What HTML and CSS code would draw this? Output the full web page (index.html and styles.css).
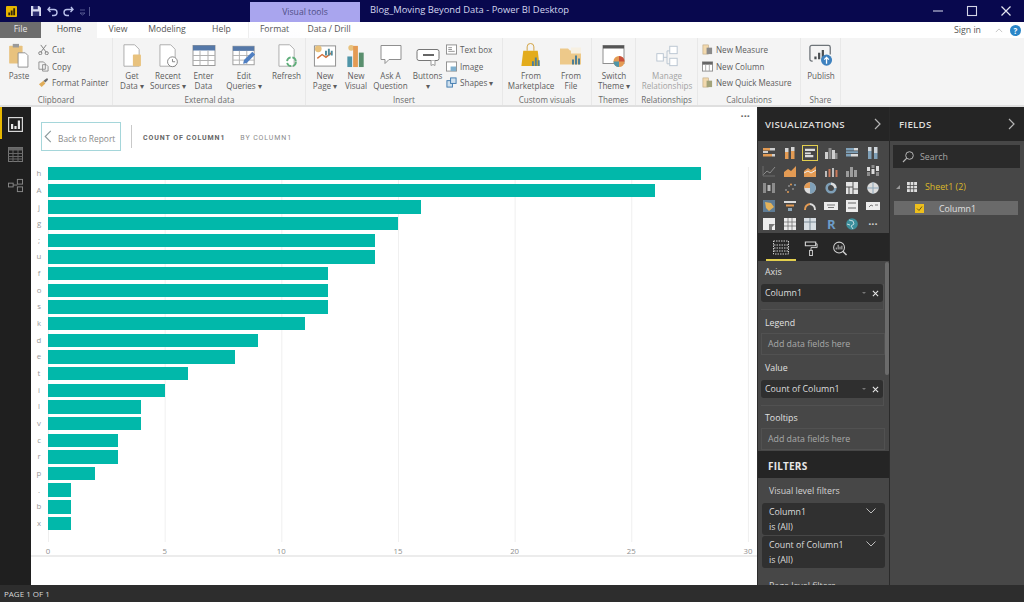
FILE: index.html
```html
<!DOCTYPE html>
<html lang="en">
<head>
<meta charset="utf-8">
<title>Blog_Moving Beyond Data - Power BI Desktop</title>
<link rel="stylesheet" href="styles.css">
</head>
<body>
<div class="app">
  <header class="titlebar">
    <div class="quick">
      <svg class="q-logo" viewBox="0 0 12 12"><rect width="12" height="12" rx="1" fill="#e6b400"/><path d="M2.5 10V7h2v3zM5.2 10V5h2v5zM7.9 10V2.5h2V10z" fill="#33280a"/></svg>
      <svg class="q-save" viewBox="0 0 11 11"><path d="M0 0h9l2 2v9H0z" fill="#d7d9ee"/><path d="M2.5 0h5v3.5h-5zM2 6h7v5H2z" fill="#2b2c70"/></svg>
      <svg class="q-undo" viewBox="0 0 11 11"><path d="M3 1 1 3.5 3.5 6M1.5 3.5H7a3 3 0 0 1 0 6H5" fill="none" stroke="#b9c0ea" stroke-width="1.4"/></svg>
      <svg class="q-redo" viewBox="0 0 11 11"><path d="M8 1l2 2.5L7.500 6M9.500 3.500H4a3 3 0 0 0 0 6h2" fill="none" stroke="#b9c0ea" stroke-width="1.400"/></svg>
      <svg class="q-more" viewBox="0 0 12 11"><path d="M1 4h5M1 7h5l-2.500 2zM10.500 1v9" fill="none" stroke="#53578f" stroke-width="1"/></svg>
    </div>
    <div class="tooltab">Visual tools</div>
    <div class="doc-title">Blog_Moving Beyond Data - Power BI Desktop</div>
    <div class="winctl">
      <svg viewBox="0 0 12 12"><path d="M1 6h10" stroke="#b9bbd6" stroke-width="1.200"/></svg>
      <svg viewBox="0 0 12 12"><rect x="1.500" y="1.500" width="9" height="9" fill="none" stroke="#d4d5e6" stroke-width="1.100"/></svg>
      <svg viewBox="0 0 12 12"><path d="M1.500 1.500l9 9M10.500 1.500l-9 9" stroke="#e4e5f0" stroke-width="1.200"/></svg>
    </div>
  </header>

  <nav class="tabs">
    <div class="tab file">File</div>
    <div class="tab home">Home</div>
    <div class="tab view">View</div>
    <div class="tab modeling">Modeling</div>
    <div class="tab help">Help</div>
    <div class="tab format">Format</div>
    <div class="tab drill">Data / Drill</div>
    <div class="signin">Sign in</div>
    <svg class="collapse" viewBox="0 0 10 6"><path d="M1 5l4-4 4 4" fill="none" stroke="#c4c4c4" stroke-width="1.200"/></svg>
    <div class="helpdot">?</div>
  </nav>

  <section class="ribbon">
    <div class="group g-clip">
      <div class="gbody">
        <div class="big w38">
          <svg viewBox="0 0 24 28"><rect x="1" y="3" width="15" height="20" rx="1" fill="#e8c27e"/><rect x="5" y="1" width="7" height="4" fill="#9a9a9a"/><path d="M11 11h8l3 3v13H11z" fill="#fff" stroke="#8a8a8a"/></svg>
          <span>Paste</span>
        </div>
        <div class="stack">
          <div class="small"><svg viewBox="0 0 12 12"><path d="M3 1l6 8M9 1L3 9" stroke="#7b7b7b" fill="none"/><circle cx="2.500" cy="10" r="1.700" fill="none" stroke="#7b7b7b"/><circle cx="9.500" cy="10" r="1.700" fill="none" stroke="#7b7b7b"/></svg>Cut</div>
          <div class="small"><svg viewBox="0 0 12 12"><path d="M1 1h5l2 2v6H1zM5 4h4l2 2v5H5z" fill="#f4f4f4" stroke="#8c8c8c"/></svg>Copy</div>
          <div class="small"><svg viewBox="0 0 12 12"><path d="M1 8l5-4 2 3-4 4z" fill="#e0ad5a"/><path d="M6 4l4-3 1 2-3 3z" fill="#6b6b6b"/></svg>Format Painter</div>
        </div>
      </div>
      <div class="glabel">Clipboard</div>
    </div>

    <div class="group g-ext">
      <div class="gbody">
        <div class="big w36"><svg viewBox="0 0 24 28"><path d="M3 2h12l5 5v19H3z" fill="#fff" stroke="#a6a6a6"/><rect x="13" y="13" width="9" height="13" rx="1" fill="#e8c27e"/></svg><span>Get<br>Data ▾</span></div>
        <div class="big w36"><svg viewBox="0 0 24 28"><path d="M3 2h12l5 5v19H3z" fill="#fff" stroke="#a6a6a6"/><circle cx="17" cy="21" r="5.500" fill="#fff" stroke="#7c7c7c"/><path d="M17 18v3h3" fill="none" stroke="#7c7c7c"/></svg><span>Recent<br>Sources ▾</span></div>
        <div class="big w35"><svg viewBox="0 0 24 24"><rect x="1" y="2" width="22" height="20" fill="#fff" stroke="#9a9a9a"/><rect x="1" y="2" width="22" height="5" fill="#5578a8"/><path d="M1 12h22M1 17h22M8 7v15M16 7v15" stroke="#b0b0b0"/></svg><span>Enter<br>Data</span></div>
        <div class="big w46"><svg viewBox="0 0 26 24"><rect x="1" y="2" width="23" height="20" fill="#fff" stroke="#9a9a9a"/><rect x="1" y="2" width="23" height="5" fill="#5578a8"/><path d="M1 12h23M1 17h23M8 7v15M16 7v15" stroke="#b0b0b0"/><path d="M12 21l1-4 9-9 3 3-9 9z" fill="#4f7fc2"/></svg><span>Edit<br>Queries ▾</span></div>
        <div class="big w39"><svg viewBox="0 0 24 28"><path d="M3 2h12l5 5v19H3z" fill="#fff" stroke="#a6a6a6"/><circle cx="17" cy="21" r="5" fill="none" stroke="#5fae7a" stroke-width="2" stroke-dasharray="6 2"/></svg><span>Refresh</span></div>
      </div>
      <div class="glabel">External data</div>
    </div>

    <div class="group g-ins">
      <div class="gbody">
        <div class="big w38"><svg viewBox="0 0 24 26"><rect x="1" y="3" width="22" height="21" fill="#fff" stroke="#8f8f8f"/><path d="M4 16l5-4 4 3 6-5" fill="none" stroke="#d2703a" stroke-width="1.500"/><path d="M13 13v-5M16 13V6M19 13V8" stroke="#4f8b9c" stroke-width="2"/><circle cx="5" cy="6" r="3.500" fill="#e8c27e"/></svg><span>New<br>Page ▾</span></div>
        <div class="big w24"><svg viewBox="0 0 22 26"><circle cx="6" cy="5" r="3" fill="#e8c27e"/><rect x="2" y="14" width="5" height="11" fill="#4f95a8"/><rect x="8" y="3" width="5" height="22" fill="#e39b54"/><rect x="14" y="10" width="5" height="15" fill="#5a8f6e"/></svg><span>New<br>Visual</span></div>
        <div class="big w45"><svg viewBox="0 0 24 24"><path d="M2 2h20v14H10l-4 4v-4H2z" fill="#fff" stroke="#8f8f8f"/></svg><span>Ask A<br>Question</span></div>
        <div class="big w29"><svg viewBox="0 0 24 24"><rect x="1" y="6" width="22" height="11" rx="2" fill="#fff" stroke="#777"/><path d="M7 11.500h11" stroke="#666" stroke-width="2"/><path d="M15 17v5l2-1 2 1v-5" fill="#fff" stroke="#999"/></svg><span>Buttons<br>▾</span></div>
        <div class="stack s-ins">
          <div class="small"><svg viewBox="0 0 12 12"><rect x=".5" y="1" width="11" height="10" fill="#fff" stroke="#8c8c8c"/><path d="M2.500 4h4M2.500 6h4M2.500 8h7" stroke="#8c8c8c"/></svg>Text box</div>
          <div class="small"><svg viewBox="0 0 12 12"><rect x=".5" y="1" width="11" height="10" fill="#fff" stroke="#8c8c8c"/><rect x="5" y="6" width="6" height="5" fill="#7fb0cf"/></svg>Image</div>
          <div class="small"><svg viewBox="0 0 12 12"><rect x="1" y="4" width="6" height="7" fill="#cfe0ee" stroke="#3d78ad"/><rect x="5" y="1" width="6" height="6" fill="#cfe0ee" stroke="#3d78ad"/></svg>Shapes ▾</div>
        </div>
      </div>
      <div class="glabel">Insert</div>
    </div>

    <div class="group g-cus">
      <div class="gbody">
        <div class="big w56"><svg viewBox="0 0 24 26"><path d="M4 8h15l2 16H2z" fill="#e3ac1c"/><path d="M8 8V4a3 3 0 0 1 7 0v4" fill="none" stroke="#d0a040"/><path d="M14 24v-5M17 24v-9M20 24v-6" stroke="#4f7f96" stroke-width="2"/></svg><span>From<br>Marketplace</span></div>
        <div class="big w24"><svg viewBox="0 0 24 24"><path d="M1 5h8l2 2h11v14H1z" fill="#edc98a"/><path d="M12 4h10v6H12z" fill="#f7f0e2"/><path d="M14 21v-5M17 21v-9M20 21v-6" stroke="#4f7f96" stroke-width="2"/></svg><span>From<br>File</span></div>
      </div>
      <div class="glabel">Custom visuals</div>
    </div>

    <div class="group g-the">
      <div class="gbody">
        <div class="big w44"><svg viewBox="0 0 24 24"><rect x="1" y="2" width="21" height="18" fill="#fff" stroke="#8f8f8f"/><rect x="1" y="2" width="21" height="3" fill="#555"/><circle cx="17" cy="18" r="5.500" fill="#e39b54"/><path d="M17 18v-5.500a5.500 5.500 0 0 1 5.500 5.500z" fill="#c9503c"/><path d="M17 18h-5.500a5.500 5.500 0 0 0 5.500 5.500z" fill="#4f95a8"/></svg><span>Switch<br>Theme ▾</span></div>
      </div>
      <div class="glabel">Themes</div>
    </div>

    <div class="group g-rel">
      <div class="gbody">
        <div class="big w62 dim"><svg viewBox="0 0 26 24"><path d="M8 14h5M13 7v14M13 7h4M13 21h4" stroke="#b8c4d0" fill="none"/><rect x="2" y="10" width="7" height="8" fill="#fff" stroke="#b8c4d0"/><rect x="16" y="2" width="8" height="8" fill="#fff" stroke="#b8c4d0"/><rect x="16" y="15" width="8" height="8" fill="#fff" stroke="#b8c4d0"/></svg><span>Manage<br>Relationships</span></div>
      </div>
      <div class="glabel">Relationships</div>
    </div>

    <div class="group g-calc">
      <div class="gbody">
        <div class="stack s-calc">
          <div class="small"><svg viewBox="0 0 12 12"><rect x="1" y="1" width="6" height="10" fill="#f2d9ae" stroke="#b9a27a" stroke-width=".6"/><rect x="5" y="4" width="6" height="7" fill="#8a8a8a"/></svg>New Measure</div>
          <div class="small"><svg viewBox="0 0 12 12"><rect x=".5" y="1" width="11" height="10" fill="#fff" stroke="#8c8c8c"/><rect x=".5" y="1" width="11" height="3" fill="#666"/><path d="M4 4v7M8 4v7" stroke="#aaa"/></svg>New Column</div>
          <div class="small"><svg viewBox="0 0 12 12"><rect x="1" y="1" width="6" height="10" fill="#f2d9ae" stroke="#b9a27a" stroke-width=".6"/><rect x="5" y="4" width="6" height="7" fill="#a3a37a"/></svg>New Quick Measure</div>
        </div>
      </div>
      <div class="glabel">Calculations</div>
    </div>

    <div class="group g-share">
      <div class="gbody">
        <div class="big w40"><svg viewBox="0 0 26 24"><path d="M4 18H3a2 2 0 0 1-2-2V3a2 2 0 0 1 2-2h18a2 2 0 0 1 2 2v8" fill="none" stroke="#6e7479" stroke-width="1.400"/><path d="M7 16v-3M11 16V9M15 16V6" stroke="#4a4f52" stroke-width="2.400"/><circle cx="19" cy="17" r="6" fill="#3f82bf"/><path d="M19 21v-7M16.500 16.500L19 14l2.500 2.500" fill="none" stroke="#fff" stroke-width="1.400"/></svg><span>Publish</span></div>
      </div>
      <div class="glabel">Share</div>
    </div>
  </section>

  <main class="workspace">
    <aside class="sidenav">
      <div class="nav-item active"><svg viewBox="0 0 15 15"><rect x=".6" y=".6" width="13.800" height="13.800" fill="none" stroke="#d8d8d8" stroke-width="1.200"/><path d="M3 12V7h2.200v5zM6.400 12V9h2.200v3zM9.800 12V3.500H12V12z" fill="#e8e8e8"/></svg></div>
      <div class="nav-item"><svg viewBox="0 0 15 15"><rect x=".5" y=".5" width="14" height="14" fill="none" stroke="#777"/><rect x=".5" y=".5" width="14" height="3" fill="#666"/><path d="M.5 6.500h14M.5 9.500h14M.5 12h14M5 3v12M10 3v12" stroke="#666"/></svg></div>
      <div class="nav-item"><svg viewBox="0 0 16 14"><g fill="none" stroke="#8a8a8a"><rect x=".5" y="4.500" width="5" height="4"/><rect x="10" y=".5" width="5.500" height="5"/><rect x="10" y="8.500" width="5.500" height="5"/><path d="M5.500 6.500h4.500"/></g></svg></div>
    </aside>

    <section class="canvas">
      <div class="focus">
        <div class="more">···</div>
        <div class="focus-head">
          <div class="back"><svg viewBox="0 0 8 14"><path d="M7 1 1 7l6 6" fill="none" stroke="#8a9a9c" stroke-width="1.200"/></svg><span>Back to Report</span></div>
          <div class="vdiv"></div>
          <div class="vt-main">COUNT OF COLUMN1</div>
          <div class="vt-sub">BY COLUMN1</div>
        </div>
        <div class="plot">
          <div class="row"><span class="cat">h</span><div class="track"><div class="bar" style="width:93.33%"></div></div></div>
          <div class="row"><span class="cat">A</span><div class="track"><div class="bar" style="width:86.67%"></div></div></div>
          <div class="row"><span class="cat">j</span><div class="track"><div class="bar" style="width:53.33%"></div></div></div>
          <div class="row"><span class="cat">g</span><div class="track"><div class="bar" style="width:50%"></div></div></div>
          <div class="row"><span class="cat">;</span><div class="track"><div class="bar" style="width:46.67%"></div></div></div>
          <div class="row"><span class="cat">u</span><div class="track"><div class="bar" style="width:46.67%"></div></div></div>
          <div class="row"><span class="cat">f</span><div class="track"><div class="bar" style="width:40%"></div></div></div>
          <div class="row"><span class="cat">o</span><div class="track"><div class="bar" style="width:40%"></div></div></div>
          <div class="row"><span class="cat">s</span><div class="track"><div class="bar" style="width:40%"></div></div></div>
          <div class="row"><span class="cat">k</span><div class="track"><div class="bar" style="width:36.67%"></div></div></div>
          <div class="row"><span class="cat">d</span><div class="track"><div class="bar" style="width:30%"></div></div></div>
          <div class="row"><span class="cat">e</span><div class="track"><div class="bar" style="width:26.67%"></div></div></div>
          <div class="row"><span class="cat">t</span><div class="track"><div class="bar" style="width:20%"></div></div></div>
          <div class="row"><span class="cat">i</span><div class="track"><div class="bar" style="width:16.67%"></div></div></div>
          <div class="row"><span class="cat">l</span><div class="track"><div class="bar" style="width:13.33%"></div></div></div>
          <div class="row"><span class="cat">v</span><div class="track"><div class="bar" style="width:13.33%"></div></div></div>
          <div class="row"><span class="cat">c</span><div class="track"><div class="bar" style="width:10%"></div></div></div>
          <div class="row"><span class="cat">r</span><div class="track"><div class="bar" style="width:10%"></div></div></div>
          <div class="row"><span class="cat">p</span><div class="track"><div class="bar" style="width:6.67%"></div></div></div>
          <div class="row"><span class="cat">.</span><div class="track"><div class="bar" style="width:3.33%"></div></div></div>
          <div class="row"><span class="cat">b</span><div class="track"><div class="bar" style="width:3.33%"></div></div></div>
          <div class="row"><span class="cat">x</span><div class="track"><div class="bar" style="width:3.33%"></div></div></div>
        </div>
        <div class="axis"><span>0</span><span>5</span><span>10</span><span>15</span><span>20</span><span>25</span><span>30</span></div>
      </div>
    </section>

    <aside class="viz">
      <div class="phead"><span>VISUALIZATIONS</span><svg viewBox="0 0 7 12"><path d="M1 1l5 5-5 5" fill="none" stroke="#b5b5b5" stroke-width="1.200"/></svg></div>
      <div class="vgrid">
        <svg viewBox="0 0 14 12"><path d="M1 1h7v2.500H1zM1 7h9v2.500H1z" fill="#e39b54"/><path d="M8 1h5v2.500H8zM10 7h3v2.500h-3zM1 4h5v2H1z" fill="#cfcfcf"/></svg>
        <svg viewBox="0 0 14 12"><path d="M2 5h3.500v7H2zM8 4h3.500v8H8z" fill="#e39b54"/><path d="M2 1h3.500v4H2zM8 0h3.500v4H8z" fill="#d5d5d5"/></svg>
        <div class="vsel"><svg viewBox="0 0 14 12"><path d="M1 1h12v3H1zM1 5h7v2.500H1zM1 8.500h10V11H1z" fill="#dcdcdc"/><path d="M1 4.500h12" stroke="#333"/></svg></div>
        <svg viewBox="0 0 14 12"><path d="M1 5h3v7H1zM8 3h3v9H8z" fill="#cfcfcf"/><path d="M4.500 1h3v11h-3zM11 6h2.500v6H11z" fill="#8c8c8c"/></svg>
        <svg viewBox="0 0 14 12"><path d="M1 1h8v2.500H1zM1 7h5v2.500H1z" fill="#7fa0b8"/><path d="M9 1h4v2.500H9zM6 7h7v2.500H6z" fill="#dcdcdc"/><path d="M1 4.200h12v2H1z" fill="#7fa0b8"/></svg>
        <svg viewBox="0 0 14 12"><path d="M2 4h3.500v8H2zM8 6h3.500v6H8z" fill="#7fa0b8"/><path d="M2 0h3.500v4H2zM8 0h3.500v6H8z" fill="#cfd6dc"/></svg>

        <svg viewBox="0 0 14 12"><path d="M1 10l4-4 3 2 5-6" fill="none" stroke="#8c8c8c"/><path d="M1 1v10h12" fill="none" stroke="#6d6d6d"/></svg>
        <svg viewBox="0 0 14 12"><path d="M1 12V7l4-3 3 2 5-5v11z" fill="#e39b54"/></svg>
        <svg viewBox="0 0 14 12"><path d="M1 12V6l4-3 3 2 5-4v11z" fill="#e39b54"/><path d="M1 8l4-2 3 2 5-3" fill="none" stroke="#eee"/></svg>
        <svg viewBox="0 0 14 12"><path d="M1 6h2v6H1zM8 3h2v9H8z" fill="#bdbdbd"/><path d="M4.500 4h2v8h-2zM11.500 5h2v7h-2z" fill="#c9795a"/></svg>
        <svg viewBox="0 0 14 12"><path d="M1 6h3v6H1zM5 2h3v10H5zM9 5h3v7H9z" fill="#9c9c9c"/></svg>
        <svg viewBox="0 0 14 12"><path d="M1 2h3v4H1zM5.500 4h3v5h-3zM10 1h3v5h-3z" fill="#dcdcdc"/><path d="M1 7h3v4H1zM5.500 0h3v3h-3zM10 7h3v4h-3z" fill="#8c8c8c"/></svg>

        <svg viewBox="0 0 14 12"><path d="M1 1h3v10H1zM10 1h3v10h-3z" fill="#8c8c8c"/><path d="M5.500 3h3v6h-3z" fill="#b8b8b8"/></svg>
        <svg viewBox="0 0 14 12"><g fill="#8d8d8d"><circle cx="3" cy="8" r="1"/><circle cx="6" cy="4" r="1"/><circle cx="10" cy="7" r="1"/></g><circle cx="8" cy="2.500" r="1" fill="#e39b54"/><circle cx="5" cy="10" r="1" fill="#e39b54"/><circle cx="12" cy="3" r="1" fill="#7fa0b8"/></svg>
        <svg viewBox="0 0 14 12"><circle cx="7" cy="6" r="5.800" fill="#dcdcdc"/><path d="M7 6V.2a5.800 5.800 0 0 1 0 11.600z" fill="#7fa0b8"/><path d="M7 6H1.200A5.800 5.800 0 0 1 7 .2z" fill="#e39b54"/></svg>
        <svg viewBox="0 0 14 12"><circle cx="7" cy="6" r="4.300" fill="none" stroke="#7fa0b8" stroke-width="2.600"/><path d="M7 1.700A4.300 4.300 0 0 1 11.300 6" fill="none" stroke="#dcdcdc" stroke-width="2.600"/></svg>
        <svg viewBox="0 0 14 12"><rect x="1" width="12" height="12" fill="#e4e4e4"/><path d="M1 5h7M8 0v12M8 7h5M4 5v7" stroke="#555"/></svg>
        <svg viewBox="0 0 14 12"><circle cx="7" cy="6" r="5.800" fill="#dcdcdc"/><path d="M1 6h12M7 0v12" stroke="#8da6b8"/></svg>

        <svg viewBox="0 0 14 12"><rect x="1" width="12" height="12" fill="#5f7c95"/><path d="M3 2l6 1 3 4-5 4-3-3z" fill="#e3b25a"/></svg>
        <svg viewBox="0 0 14 12"><path d="M1 1h12v2H1z" fill="#dcdcdc"/><path d="M3 4.500h8v2H3z" fill="#e39b54"/><path d="M5 8h4v3H5z" fill="#8da6b8"/></svg>
        <svg viewBox="0 0 14 12"><path d="M2 10A5.500 5.500 0 0 1 7 4" fill="none" stroke="#e39b54" stroke-width="2"/><path d="M7 4a5.500 5.500 0 0 1 5 6" fill="none" stroke="#dcdcdc" stroke-width="2"/></svg>
        <svg viewBox="0 0 14 12"><rect y="2" width="14" height="8" fill="#ececec"/><path d="M3 5h8M4 7.500h6" stroke="#777"/></svg>
        <svg viewBox="0 0 14 12"><rect x="1" width="12" height="12" fill="#ececec"/><path d="M3 3h8M3 8h8" stroke="#666" stroke-width="1.200"/></svg>
        <svg viewBox="0 0 14 12"><rect y="2" width="14" height="8" fill="#ececec"/><path d="M3 7l2-2 2 1M9 5h3" stroke="#777" fill="none"/></svg>

        <svg viewBox="0 0 14 12"><rect x="1" width="12" height="12" fill="#ececec"/><path d="M7 6h6l-3 3v3H7z" fill="#777"/></svg>
        <svg viewBox="0 0 14 12"><rect x="1" width="12" height="12" fill="#ececec"/><path d="M1 4h12M1 8h12M5 0v12M9 0v12" stroke="#666" stroke-width=".7"/></svg>
        <svg viewBox="0 0 14 12"><rect x="1" width="12" height="12" fill="#d8dee3"/><path d="M1 4h12M7 0v12" stroke="#7a8a96"/></svg>
        <div class="vr">R</div>
        <svg viewBox="0 0 14 12"><circle cx="7" cy="6" r="5.800" fill="#3c8f9c"/><path d="M4 2l4 1 1 3-3 2 2 3M2 6l3 1" fill="none" stroke="#cfe3e6" stroke-width=".9"/></svg>
        <div class="vdots">···</div>
      </div>
      <div class="vtabs">
        <div class="vtab on"><svg viewBox="0 0 16 14"><rect x=".5" y=".5" width="15" height="13" fill="none" stroke="#cfcfcf" stroke-dasharray="1.500 1"/><path d="M1 4.500h14M1 7.500h14M1 10.500h14" stroke="#cfcfcf" stroke-dasharray="1.500 1"/></svg></div>
        <div class="vtab"><svg viewBox="0 0 14 16"><path d="M1 1h11v4H1z" fill="none" stroke="#d5d5d5" stroke-width="1.200"/><path d="M12 3h1.500v4H7v3" fill="none" stroke="#d5d5d5"/><rect x="5.500" y="10" width="3" height="5.500" fill="none" stroke="#d5d5d5"/></svg></div>
        <div class="vtab"><svg viewBox="0 0 16 16"><circle cx="7" cy="7" r="5.800" fill="none" stroke="#cfcfcf" stroke-width="1.100"/><path d="M4 9V7M6 9V4M8 9V6M10 9V5" stroke="#cfcfcf"/><path d="M11 11l4 4" stroke="#cfcfcf" stroke-width="1.600"/></svg></div>
      </div>
      <div class="wells">
        <div class="wlabel">Axis</div>
        <div class="wbox filled"><div class="field"><span>Column1</span><i class="dd"></i><svg class="x" viewBox="0 0 8 8"><path d="M1 1l6 6M7 1 1 7" stroke="#e8e8e8" stroke-width="1.200"/></svg></div></div>
        <div class="wlabel">Legend</div>
        <div class="wbox empty">Add data fields here</div>
        <div class="wlabel l-val">Value</div>
        <div class="wbox filled"><div class="field"><span>Count of Column1</span><i class="dd"></i><svg class="x" viewBox="0 0 8 8"><path d="M1 1l6 6M7 1 1 7" stroke="#e8e8e8" stroke-width="1.200"/></svg></div></div>
        <div class="wlabel l-tip">Tooltips</div>
        <div class="wbox empty">Add data fields here</div>
        <div class="scroll"></div>
      </div>
      <div class="fhead">FILTERS</div>
      <div class="filters">
        <div class="flabel">Visual level filters</div>
        <div class="fcard"><div>Column1<br>is (All)</div><svg viewBox="0 0 10 6"><path d="M.5.5 5 5 9.500.5" fill="none" stroke="#bdbdbd"/></svg></div>
        <div class="fcard"><div>Count of Column1<br>is (All)</div><svg viewBox="0 0 10 6"><path d="M.5.5 5 5 9.500.5" fill="none" stroke="#bdbdbd"/></svg></div>
        <div class="flabel f2">Page level filters</div>
      </div>
    </aside>

    <aside class="fields">
      <div class="phead"><span>FIELDS</span><svg viewBox="0 0 7 12"><path d="M1 1l5 5-5 5" fill="none" stroke="#b5b5b5" stroke-width="1.200"/></svg></div>
      <div class="fbody">
        <div class="search"><svg viewBox="0 0 12 12"><circle cx="7.500" cy="4.500" r="3.800" fill="none" stroke="#b5b5b5"/><path d="M4.800 7.200 1 11" stroke="#b5b5b5" stroke-width="1.200"/></svg>Search</div>
        <div class="tree-table"><i class="tri"></i><svg viewBox="0 0 10 10"><rect width="10" height="10" fill="#dedede"/><path d="M0 3.500h10M0 6.700h10M3.300 0v10M6.700 0v10" stroke="#4a4a4a" stroke-width=".8"/></svg><span>Sheet1 (2)</span></div>
        <div class="tree-col"><svg viewBox="0 0 9 9"><rect width="9" height="9" fill="#edbf1d"/><path d="M2 4.500 4 6.500 7 2.500" fill="none" stroke="#6b5a12"/></svg><span>Column1</span></div>
      </div>
    </aside>
  </main>

  <footer class="status">PAGE 1 OF 1</footer>
</div>
</body>
</html>
```

FILE: styles.css
```css
* { box-sizing: border-box; }
html, body { margin: 0; height: 100%; overflow: hidden; }
body { font-family: "Open Sans", "Liberation Sans", sans-serif; background: #fff; }
svg { display: block; flex: none; }
.app { width: 1024px; height: 602px; display: flex; flex-direction: column; overflow: hidden; }

/* title bar */
.titlebar { height: 22px; background: #08084e; display: flex; flex: none; color: #d9dbee; font-size: 9.4px; }
.quick { width: 250px; display: flex; align-items: center; padding-left: 6px; }
.q-logo { width: 11px; height: 11px; }
.q-save { width: 10px; height: 10px; margin-left: 14px; }
.q-undo { width: 11px; height: 11px; margin-left: 6px; }
.q-redo { width: 11px; height: 11px; margin-left: 5px; }
.q-more { width: 12px; height: 11px; margin-left: 5px; }
.tooltab { width: 110px; margin-top: 2px; background: #a9a5ee; color: #4f4f86; font-size: 8.6px; text-align: center; line-height: 20px; }
.doc-title { padding-left: 10px; line-height: 20px; color: #d4d7ee; }
.winctl { margin-left: auto; display: flex; align-items: center; gap: 22px; padding-right: 12px; }
.winctl svg { width: 12px; height: 12px; }

/* tabs */
.tabs { height: 16px; background: #fff; display: flex; flex: none; align-items: center; font-size: 8.7px; color: #555; }
.tab { height: 16px; line-height: 15px; text-align: center; }
.file { width: 41px; background: #6d6d6d; color: #e6e6e6; }
.home { width: 56px; background: #f4f4f4; height: 17px; color: #444; }
.view { width: 42px; }
.modeling { width: 56px; }
.help { width: 53px; }
.format { width: 52px; background: linear-gradient(#fff,#fdfdff); border-left: 1px solid #eee; }
.drill { width: 58px; }
.signin { margin-left: auto; margin-right: 14px; font-size: 8.8px; color: #555; line-height: 15px; }
.collapse { width: 8px; height: 5px; margin-right: 7px; }
.helpdot { width: 11px; height: 11px; border-radius: 50%; background: #2a86c8; color: #fff; font-size: 8px; line-height: 11px; text-align: center; font-weight: 700; margin-right: 3px; }

/* ribbon */
.ribbon { height: 69px; flex: none; background: #f4f4f4; border-bottom: 2px solid #dfdfdf; display: flex; font-size: 8.1px; color: #5c5c5c; }
.group { display: flex; flex-direction: column; border-right: 1px solid #e8e8e8; flex: none; }
.gbody { flex: 1; display: flex; padding-top: 3px; min-height: 0; }
.glabel { height: 12px; line-height: 13px; text-align: center; color: #6b6b6b; font-size: 8.1px; white-space: nowrap; }
.g-clip { width: 113px; }
.g-ext { width: 193px; padding-left: 1px; }
.g-ins { width: 197px; }
.g-cus { width: 89px; }
.g-the { width: 44px; }
.g-rel { width: 62px; }
.g-calc { width: 103px; }
.g-share { width: 40px; }
.big { display: flex; flex-direction: column; align-items: center; text-align: center; line-height: 9.6px; flex: none; white-space: nowrap; }
.big svg { width: 24px; height: 25px; margin-bottom: 3px; margin-top: 2px; }
.dim { color: #a3a3a3; }
.w24 { width: 24px; } .w29 { width: 29px; } .w35 { width: 35px; } .w36 { width: 36px; } .w38 { width: 38px; }
.w39 { width: 39px; } .w40 { width: 40px; } .w44 { width: 44px; } .w45 { width: 45px; } .w46 { width: 46px; }
.w56 { width: 56px; } .w62 { width: 62px; }
.stack { display: flex; flex-direction: column; gap: 4px; padding-top: 2.5px; }
.s-ins { padding-left: 4px; }
.s-calc { padding-left: 4px; }
.small { display: flex; align-items: center; gap: 3px; height: 12.5px; white-space: nowrap; font-size: 8.1px; }
.small svg { width: 11px; height: 11px; }

/* workspace */
.workspace { flex: 1; display: flex; min-height: 0; }
.sidenav { width: 31px; background: #1f1f1f; flex: none; display: flex; flex-direction: column; }
.nav-item { height: 31px; display: flex; align-items: center; justify-content: center; flex: none; }
.nav-item svg { width: 15px; height: 15px; }
.nav-item.active { height: 32px; border-left: 2px solid #e8b800; padding: 2px 2px 0 0; }
.canvas { flex: 1; min-width: 0; background: #fff; overflow: hidden; }
.focus { height: 450px; border-bottom: 2px solid #ececec; position: relative; padding-top: 15px; }
.more { position: absolute; top: 4px; right: 7px; font-size: 11px; line-height: 10px; color: #666; font-weight: 700; }
.focus-head { display: flex; align-items: center; height: 29px; margin-left: 10px; color: #8b8b8b; }
.back { width: 80px; height: 29px; border: 1px solid #a5d6da; display: flex; align-items: center; gap: 6px; padding-left: 2px; font-size: 8.4px; color: #8a8a8a; white-space: nowrap; }
.back span { padding-top: 3px; }
.back svg { width: 8px; height: 13px; }
.vdiv { width: 1px; height: 23px; background: #c9c9c9; margin-left: 10px; }
.vt-main { margin-left: 11px; font-size: 7px; font-weight: 700; letter-spacing: .9px; color: #666; white-space: nowrap; padding-top: 2px; font-family: "Roboto", sans-serif; }
.vt-sub { margin-left: 15px; font-size: 7px; letter-spacing: .9px; color: #8b8b8b; white-space: nowrap; padding-top: 2px; font-family: "Roboto", sans-serif; }
.plot { margin-top: 16px; height: 375px; background-image: linear-gradient(90deg, #efefef 1px, transparent 1px); background-size: 116.667px 100%; background-position: 17px 0; }
.row { display: flex; height: 13.4px; margin-bottom: 3.28px; align-items: center; }
.cat { width: 17px; flex: none; font-size: 7.8px; color: #9a9a9a; text-align: center; padding-right: 1px; line-height: 13px; }
.track { width: 700px; flex: none; height: 100%; }
.bar { height: 100%; background: #01b8aa; }
.axis { display: flex; gap: 76.667px; margin-left: -3px; margin-top: 3px; font-size: 7.8px; color: #8f8f8f; }
.axis span { width: 40px; flex: none; text-align: center; line-height: 12px; }

/* panels */
.viz { width: 133px; flex: none; background: #474747; display: flex; flex-direction: column; border-right: 1px solid #2a2a2a; border-left: 1px solid #2c2c2c; color: #dcdcdc; overflow: hidden; }
.phead { height: 34px; flex: none; background: #252525; display: flex; align-items: center; justify-content: space-between; padding: 0 8px; font-size: 9.7px; font-weight: 600; color: #dedede; letter-spacing: .2px; }
.phead svg { width: 7px; height: 12px; }
.viz .phead { padding-left: 7px; }
.vgrid { height: 92px; flex: none; display: grid; grid-template-columns: repeat(6, 20.8px); grid-auto-rows: 17.8px; justify-items: center; align-items: center; padding: 3px 0 0 .5px; background: #474747; }
.vgrid svg { width: 14px; height: 12px; }
.vsel { width: 16px; height: 16px; border: 1px solid #e3cf4e; display: flex; align-items: center; justify-content: center; }
.vsel svg { width: 12px; height: 10px; }
.vr { color: #6c9cc8; font-size: 13px; font-weight: 700; line-height: 14px; }
.vdots { color: #cfcfcf; font-size: 11px; line-height: 10px; font-weight: 700; }
.vtabs { height: 28px; flex: none; background: #262626; display: flex; padding-left: 8px; }
.vtab { width: 29px; display: flex; align-items: center; justify-content: center; padding-top: 2px; }
.vtab.on { width: 30px; border-bottom: 2px solid #e3cf4e; }
.vtab svg { width: 16px; height: 15px; }
.wells { height: 190px; flex: none; padding: 1px 3px 0; position: relative; }
.wlabel { height: 20px; line-height: 20px; font-size: 8.8px; padding-left: 4px; color: #e0e0e0; }
.l-val { margin-top: 3px; }
.l-tip { margin-top: -1px; }
.wbox { width: 124px; border: 1px solid #515151; }
.filled { margin-top: 2px; height: 26px; margin-bottom: 3px; border-top: none; border-left: none; width: 123px; }
.empty { height: 22px; line-height: 20px; font-size: 8.8px; color: #a9a9a9; padding-left: 6px; }
.field { height: 18px; background: #2f2f2f; border-radius: 3px; display: flex; align-items: center; padding: 0 4px; font-size: 8.8px; color: #dedede; }
.field span { flex: 1; white-space: nowrap; }
.dd { width: 0; height: 0; border: 2.5px solid transparent; border-top-color: #777; margin: 2px 6px 0 0; }
.x { width: 7px; height: 7px; }
.scroll { position: absolute; top: 1px; right: 0; width: 4px; height: 113px; background: #6b6b6b; border-radius: 2px; }
.fhead { height: 27px; flex: none; background: #252525; font-size: 10px; font-weight: 700; line-height: 27px; padding: 2px 0 0 10px; color: #e8e8e8; letter-spacing: .2px; }
.filters { flex: 1; padding: 0 4px; font-size: 8.8px; min-height: 0; overflow: hidden; }
.flabel { height: 25px; line-height: 26px; padding-left: 7px; color: #d4d4d4; white-space: nowrap; }
.f2 { margin-top: 5px; }
.fcard { height: 32px; background: #303030; border-radius: 3px; margin-bottom: 1px; padding: 2px 7px; line-height: 14.5px; display: flex; justify-content: space-between; color: #dcdcdc; }
.fcard svg { width: 10px; height: 6px; margin: 3px 2px 0 0; }

.fields { width: 134px; flex: none; background: #474747; display: flex; flex-direction: column; color: #dcdcdc; min-width: 0; }
.fields .phead { padding-left: 9px; padding-right: 9px; }
.fbody { flex: 1; padding: 4px 3px 0; }
.search { height: 23px; background: #2a2a2a; margin-right: 1px; display: flex; align-items: center; gap: 6px; padding-left: 9px; font-size: 8.8px; color: #a5a5a5; }
.search svg { width: 12px; height: 12px; }
.tree-table { display: flex; align-items: center; margin: 12px 0 0 3px; height: 14px; font-size: 8.8px; color: #dcb92a; }
.tri { width: 0; height: 0; border-style: solid; border-width: 0 0 4px 4px; border-color: transparent transparent #9a9a9a; margin-right: 7px; }
.tree-table svg { width: 10px; height: 10px; margin-right: 8px; }
.tree-col { display: flex; align-items: center; height: 14px; margin: 7px 3px 0 1px; background: #6a6a6a; font-size: 8.8px; padding: 1px 0 0 21px; color: #e0e0e0; }
.tree-col svg { width: 9px; height: 9px; margin-right: 15px; }

.status { height: 17px; flex: none; background: #2d2d2d; color: #d8d8d8; font-size: 8px; line-height: 17px; padding-left: 4px; }
```
